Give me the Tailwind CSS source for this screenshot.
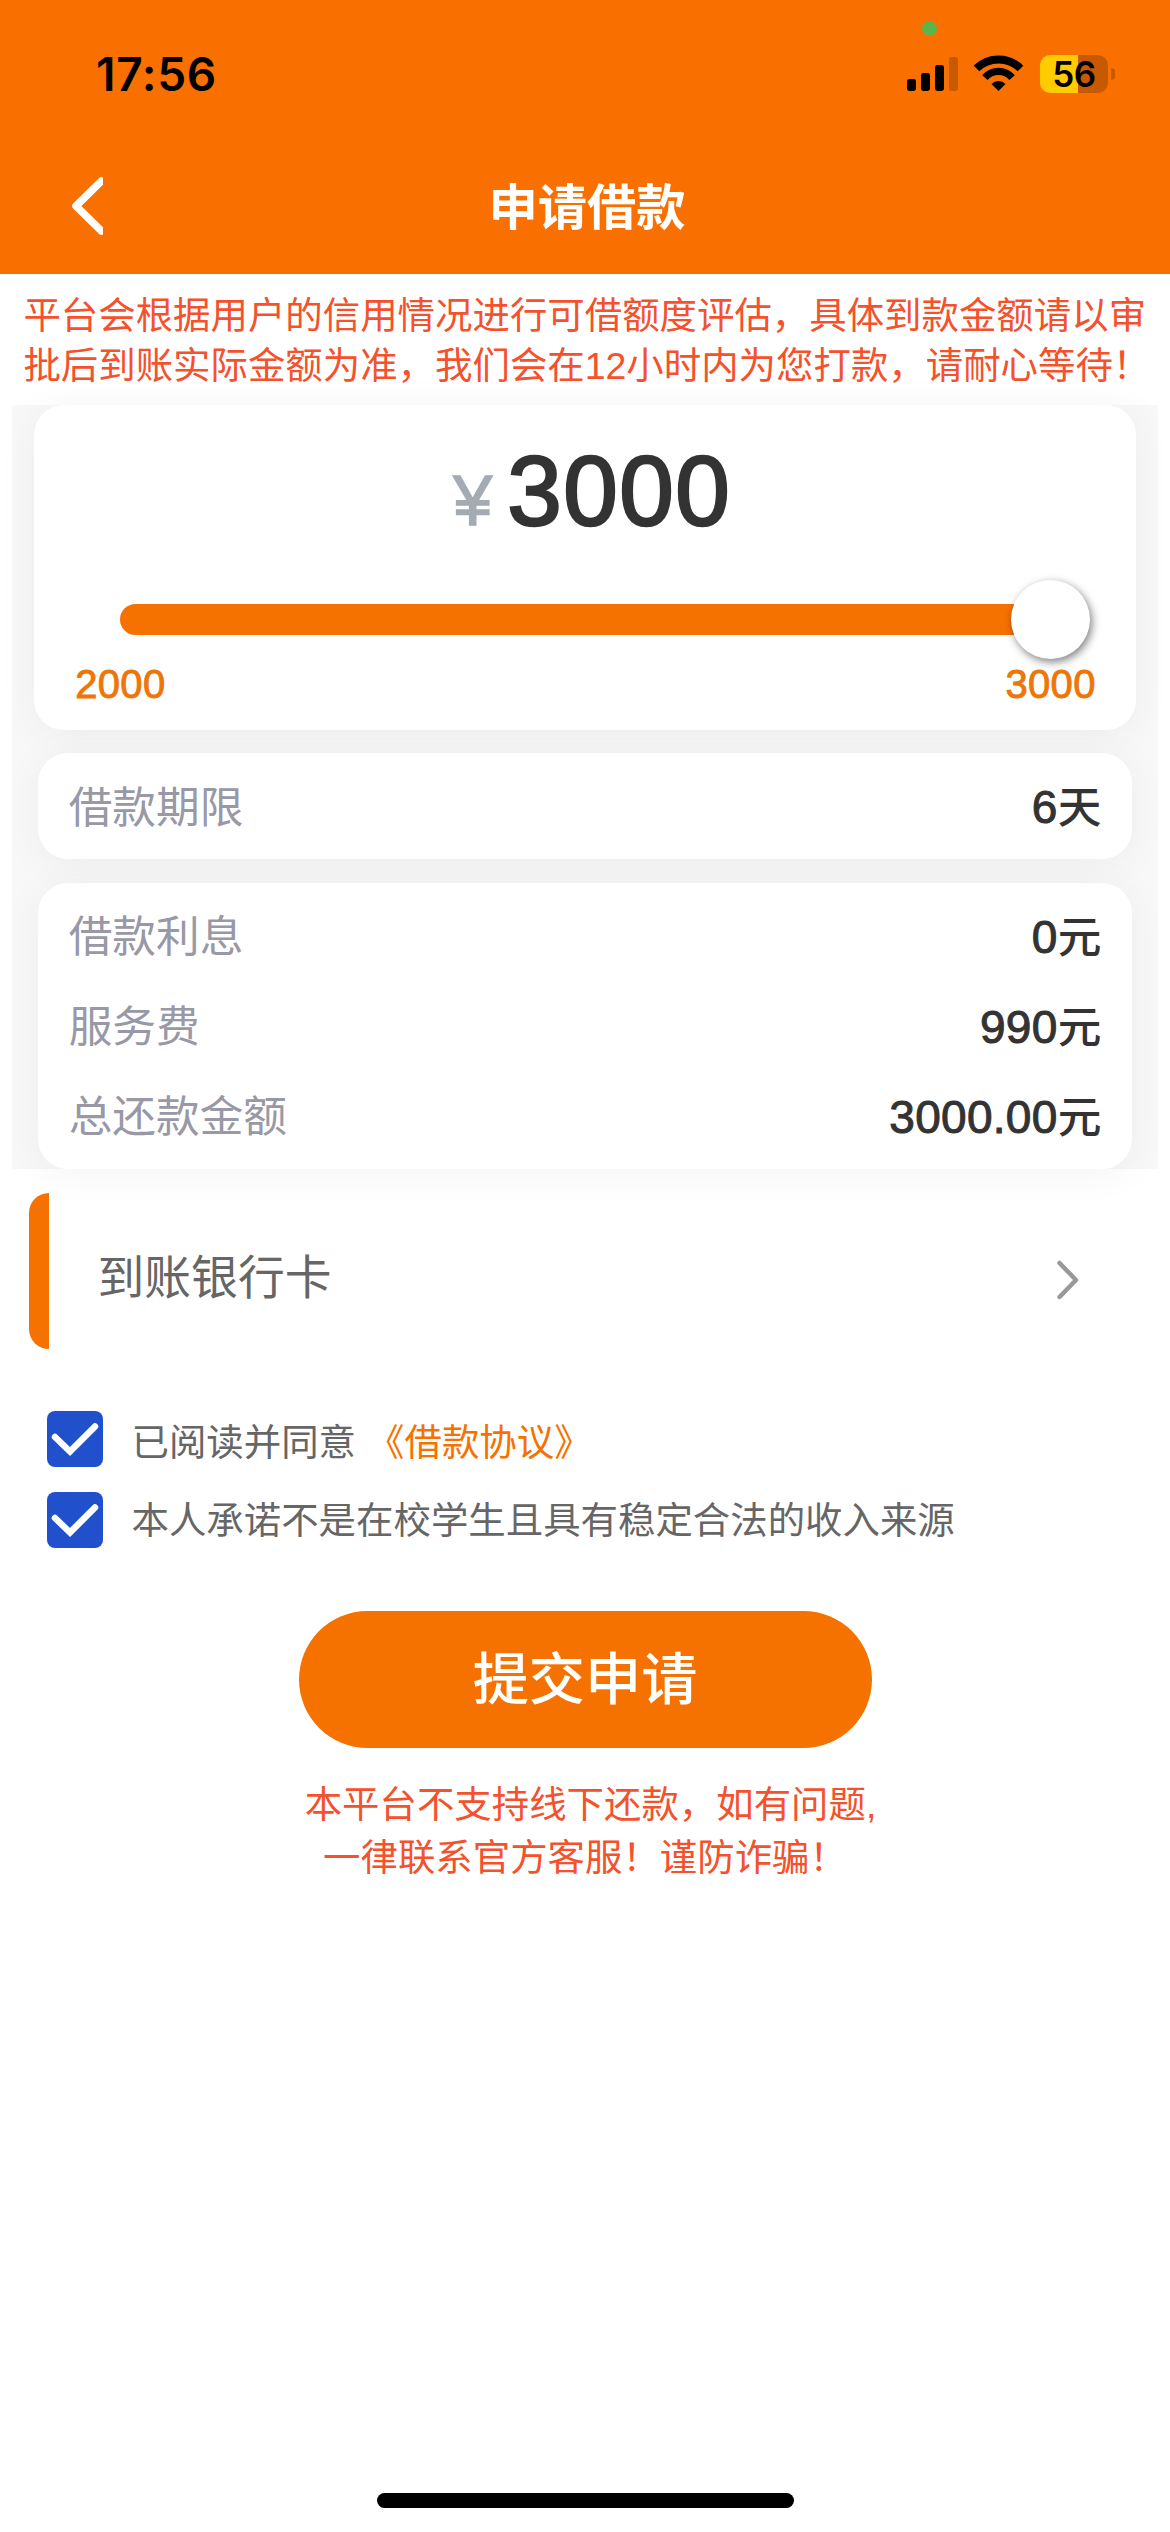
<!DOCTYPE html>
<html lang="zh-CN">
<head>
<meta charset="utf-8">
<title>申请借款</title>
<script src="https://cdn.jsdelivr.net/npm/@tailwindcss/browser@4"></script>
</head>
<body class="w-[1170px] h-[2532px] bg-white overflow-hidden flex flex-col font-['Liberation_Sans','Noto_Sans_CJK_SC',sans-serif]">
  <header class="relative h-[274px] shrink-0 bg-[#f97000] flex flex-col">
    <span class="absolute left-[922px] top-[21px] size-[15px] rounded-full bg-[#5cb548]"></span>
    <div class="h-[148px] shrink-0 flex items-center justify-between pl-[96px] pr-[55px]">
      <span class="font-['Inter',sans-serif] font-semibold text-[46px] leading-[46px] tracking-[0.700px] text-black">17:56</span>
      <div class="flex items-center">
        <svg class="w-[52px] h-[38px]" viewBox="0 0 52 38">
          <rect x="0" y="24" width="9" height="12" rx="2.4"/>
          <rect x="14" y="18" width="9" height="18" rx="2.4"/>
          <rect x="28" y="10" width="9" height="26" rx="2.4"/>
          <rect x="42" y="2" width="9" height="34" rx="2.4" fill-opacity=".2"/>
        </svg>
        <svg class="ml-[15px] w-[50px] h-[38px]" viewBox="0 0 50 38">
          <g fill="none" stroke="#000">
            <path stroke-width="8" d="M2.500 13.500 A31.400 31.400 0 0 1 46.500 13.500"/>
            <path stroke-width="7.300" d="M10.900 22.600 A17.900 17.900 0 0 1 38.100 22.600"/>
          </g>
          <path d="M24.500 36 L17.500 29 A9.800 9.800 0 0 1 31.500 29 Z"/>
        </svg>
        <div class="ml-[16px] w-[68px] h-[38px] rounded-[10px] bg-[linear-gradient(90deg,#ffcc00_38px,#c75a00_38px)] flex items-center justify-center">
          <span class="font-['Inter',sans-serif] font-semibold text-[35px] leading-[38px] tracking-[-0.500px] text-black">56</span>
        </div>
        <div class="ml-[3px] w-[4px] h-[12px] rounded-r-full bg-[#c75a00]"></div>
      </div>
    </div>
    <div class="flex-1 grid grid-cols-[1fr_auto_1fr] items-center pb-[10px] pl-[70px] pr-[66px]">
      <svg class="w-[33px] h-[58px]" viewBox="0 0 33 58"><path d="M31.500 4 L6 29 L31.500 54" fill="none" stroke="#fff" stroke-width="7.500" stroke-linecap="round" stroke-linejoin="round"/></svg>
      <h1 class="font-['Noto_Sans_CJK_SC',sans-serif] font-bold text-[49.300px] leading-[60px] text-white mb-[5px]">申请借款</h1>
      <span></span>
    </div>
  </header>

  <p class="h-[131px] shrink-0 pt-[17px] pl-[23.400px] whitespace-nowrap text-[37.440px] leading-[50px] text-[#f4512c]">平台会根据用户的信用情况进行可借额度评估，具体到款金额请以审<br>批后到账实际金额为准，我们会在12小时内为您打款，请耐心等待！</p>

  <main class="mx-[11.700px] h-[764px] shrink-0 bg-[#f8f8f8] flex flex-col">
    <section class="mx-[22.600px] h-[325px] rounded-[30px] bg-white shadow-[0_4px_40px_rgba(0,0,0,0.05)] flex flex-col">
      <div class="h-[175px] pt-[36px] pl-[419px] flex items-baseline">
        <span class="text-[70px] leading-[100px] text-[#a4abb3] [-webkit-text-stroke:1.500px_#a4abb3]">¥</span>
        <span class="ml-[15px] text-[98px] leading-[100px] text-[#333] tracking-[1.500px] [-webkit-text-stroke:2.500px_#333]">3000</span>
      </div>
      <div class="ml-[86px] mr-[46px] h-[79px] flex items-center">
        <div class="flex-1 h-[31px] rounded-l-full bg-[#f67200]"></div>
        <div class="-ml-[6px] size-[79px] rounded-full bg-white shadow-[2px_3px_9px_rgba(0,0,0,0.5)]"></div>
      </div>
      <div class="pl-[41px] pr-[40px] pt-[1px] flex justify-between text-[40px] leading-[48px] tracking-[0.300px] text-[#ee7508] [-webkit-text-stroke:0.900px_#ee7508]">
        <span>2000</span><span>3000</span>
      </div>
    </section>
    <section class="mx-[26px] mt-[23px] h-[106px] rounded-[30px] bg-white shadow-[0_4px_40px_rgba(0,0,0,0.05)] px-[31px] pt-[3px] flex items-center justify-between text-[43.680px]">
      <span class="text-[#9898a6]">借款期限</span>
      <span class="font-medium text-[#333]"><span class="font-normal text-[46px] tracking-[0.300px] [-webkit-text-stroke:1px_#333]">6</span>天</span>
    </section>
    <section class="mx-[26px] mt-[24px] h-[286px] rounded-[30px] bg-white shadow-[0_4px_40px_rgba(0,0,0,0.05)] px-[31px] pt-[9px] flex flex-col text-[43.680px]">
      <div class="h-[90px] flex items-center justify-between">
        <span class="text-[#9898a6]">借款利息</span>
        <span class="font-medium text-[#333]"><span class="font-normal text-[46px] tracking-[0.300px] [-webkit-text-stroke:1px_#333]">0</span>元</span>
      </div>
      <div class="h-[90px] flex items-center justify-between">
        <span class="text-[#9898a6]">服务费</span>
        <span class="font-medium text-[#333]"><span class="font-normal text-[46px] tracking-[0.300px] [-webkit-text-stroke:1px_#333]">990</span>元</span>
      </div>
      <div class="h-[90px] flex items-center justify-between">
        <span class="text-[#9898a6]">总还款金额</span>
        <span class="font-medium text-[#333]"><span class="font-normal text-[46px] tracking-[0.300px] [-webkit-text-stroke:1px_#333]">3000.00</span>元</span>
      </div>
    </section>
  </main>

  <section class="mt-[24px] ml-[29px] mr-[29px] h-[156px] shrink-0 flex items-center">
    <div class="w-[19.500px] h-[156px] rounded-l-[20px] bg-[#f67200]"></div>
    <span class="ml-[49px] mt-[13px] flex-1 text-[46.800px] leading-[60px] text-[#666]">到账银行卡</span>
    <svg class="mt-[18px] mr-[61px] w-[24px] h-[40px]" viewBox="0 0 24 40"><path d="M3.500 3 L20 20 L3.500 37" fill="none" stroke="#999" stroke-width="4.500" stroke-linecap="round" stroke-linejoin="round"/></svg>
  </section>

  <section class="mt-[62px] ml-[47px] shrink-0 flex flex-col gap-[25px] text-[37.440px] leading-[56px] text-[#666]">
    <div class="flex items-center h-[56px]">
      <svg class="size-[56px]" viewBox="0 0 56 56"><rect width="56" height="56" rx="8" fill="#2050cc"/><path d="M8 26 L23 40.500 L48 15.500" fill="none" stroke="#fff" stroke-width="6.500" stroke-linecap="round" stroke-linejoin="miter"/></svg>
      <span class="ml-[28.500px] pt-[7px]">已阅读并同意</span>
      <span class="ml-[11px] pt-[7px] text-[#f67200]">《借款协议》</span>
    </div>
    <div class="flex items-center h-[56px]">
      <svg class="size-[56px]" viewBox="0 0 56 56"><rect width="56" height="56" rx="8" fill="#2050cc"/><path d="M8 26 L23 40.500 L48 15.500" fill="none" stroke="#fff" stroke-width="6.500" stroke-linecap="round" stroke-linejoin="miter"/></svg>
      <span class="ml-[28.500px] pt-[2px]">本人承诺不是在校学生且具有稳定合法的收入来源</span>
    </div>
  </section>

  <button class="mt-[63px] mx-auto w-[573px] h-[137px] shrink-0 rounded-full bg-[#f67200] flex items-center justify-center font-medium text-[56.160px] leading-[70px] text-white">提交申请</button>

  <div class="mt-[31px] shrink-0 flex flex-col items-center text-[37.440px] leading-[53px] text-[#f4512c]">
    <p class="pl-[11px]">本平台不支持线下还款，如有问题,</p>
    <p>一律联系官方客服！谨防诈骗！</p>
  </div>

  <div class="mt-auto mb-[24px] mx-auto w-[417px] h-[15px] shrink-0 rounded-full bg-black"></div>
</body>
</html>
